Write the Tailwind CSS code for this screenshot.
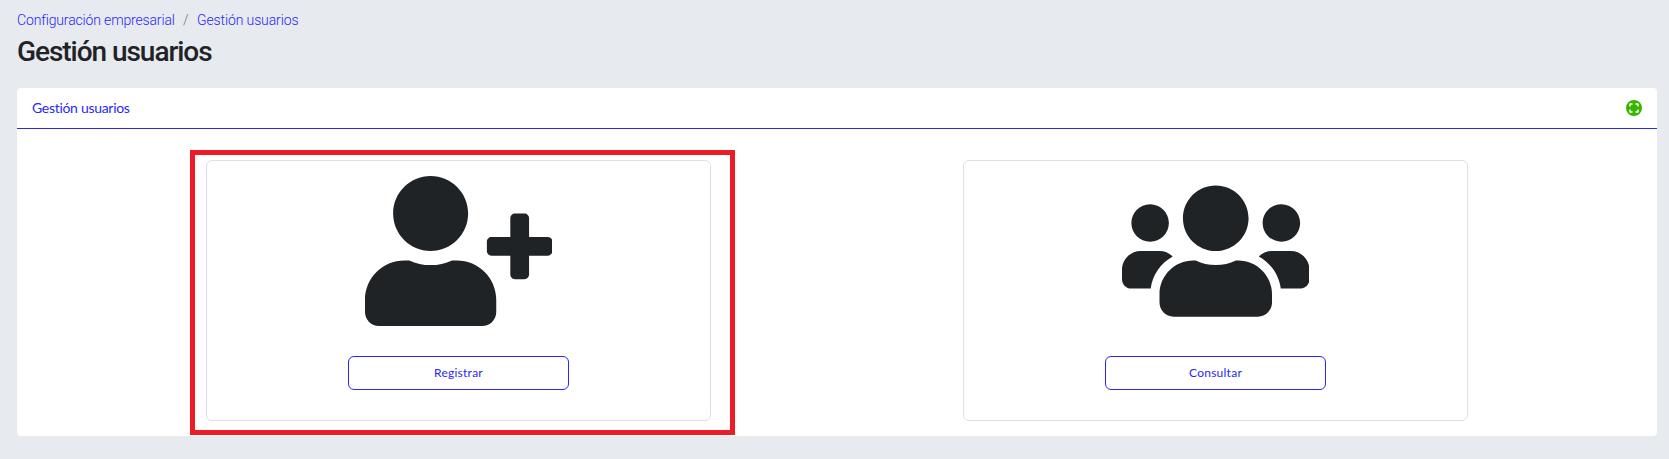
<!DOCTYPE html>
<html lang="es">
<head>
<meta charset="utf-8">
<title>Gestión usuarios</title>
<script src="https://cdn.jsdelivr.net/npm/@tailwindcss/browser@4"></script>
</head>
<body class="h-[459px] overflow-hidden bg-[#e7eaef] pl-[17px] pr-3 font-['Lato','Open_Sans',sans-serif] text-[#1f2326]">
  <nav class="flex h-[31px] items-start pt-[10px] font-['Roboto',sans-serif] text-sm leading-5 font-light text-[#2828f5]">
    <a class="w-[166px] whitespace-nowrap tracking-[-0.15px]">Configuración empresarial</a>
    <span class="w-[14px] text-gray-500">/</span>
    <a class="whitespace-nowrap tracking-[-0.12px]">Gestión usuarios</a>
  </nav>
  <h1 class="h-[57px] pt-[3px] font-['Roboto',sans-serif] text-[28px] leading-9 font-medium tracking-[-1.05px]">Gestión usuarios</h1>
  <main class="h-[348px] rounded bg-white">
    <header class="flex h-[41px] items-center justify-between border-b border-[#2828f5] pl-[15px] pr-[15px]">
      <span class="text-sm tracking-[-0.3px] text-[#2828f5]" >Gestión usuarios</span>
      <svg class="size-4" viewBox="0 0 16 16">
        <circle cx="8" cy="8" r="8" fill="#36b400"/>
        <path d="M4 6.600V4h2.600M9.400 4H12v2.600M12 9.400V12H9.400M6.600 12H4V9.400" fill="none" stroke="#fff" stroke-width="1.500" stroke-linejoin="round"/>
      </svg>
    </header>
    <div class="grid grid-cols-[505px_505px] gap-x-[252px] pl-[189px] pt-[31px]">
      <section class="relative flex h-[261px] flex-col items-center rounded-md border border-[#dfe0e3] pt-[15px]">
        <div class="absolute -left-[17px] -top-[11px] h-[285px] w-[545px] border-5 border-[#ee1b24]"></div>
        <svg class="h-[150px] w-[187.5px]" viewBox="0 0 640 512" fill="#1f2326"><path d="M624 208h-64v-64c0-8.800-7.200-16-16-16h-32c-8.800 0-16 7.200-16 16v64h-64c-8.800 0-16 7.200-16 16v32c0 8.800 7.200 16 16 16h64v64c0 8.800 7.200 16 16 16h32c8.800 0 16-7.200 16-16v-64h64c8.800 0 16-7.200 16-16v-32c0-8.800-7.200-16-16-16zm-400 48c70.700 0 128-57.300 128-128S294.700 0 224 0 96 57.300 96 128s57.300 128 128 128zm89.600 32h-16.700c-22.200 10.200-46.900 16-72.900 16s-50.600-5.800-72.900-16h-16.700C60.200 288 0 348.200 0 422.400V464c0 26.500 21.500 48 48 48h352c26.500 0 48-21.500 48-48v-41.600c0-74.200-60.200-134.400-134.400-134.400z"/></svg>
        <button class="mt-[30px] h-[34px] w-[221px] shrink-0 rounded-md border border-[#2828f5] text-xs tracking-[0.25px] text-[#2828f5]">Registrar</button>
      </section>
      <section class="flex h-[261px] flex-col items-center rounded-md border border-[#dfe0e3] pt-[15px]">
        <svg class="h-[150px] w-[187.5px]" viewBox="0 0 640 512" fill="#1f2326"><path d="M96 224c35.300 0 64-28.700 64-64s-28.700-64-64-64-64 28.700-64 64 28.700 64 64 64zm448 0c35.300 0 64-28.700 64-64s-28.700-64-64-64-64 28.700-64 64 28.700 64 64 64zm32 32h-64c-17.600 0-33.500 7.100-45.100 18.600 40.300 22.100 68.900 62 75.100 109.400h66c17.700 0 32-14.300 32-32v-32c0-35.300-28.700-64-64-64zm-256 0c61.900 0 112-50.100 112-112S381.900 32 320 32 208 82.100 208 144s50.100 112 112 112zm76.800 32h-8.300c-20.800 10-43.900 16-68.500 16s-47.600-6-68.500-16h-8.300C179.600 288 128 339.600 128 403.200V432c0 26.500 21.500 48 48 48h288c26.500 0 48-21.500 48-48v-28.800c0-63.600-51.600-115.200-115.200-115.200zm-223.700-13.400C161.500 263.100 145.600 256 128 256H64c-35.300 0-64 28.700-64 64v32c0 17.700 14.300 32 32 32h65.900c6.300-47.400 34.900-87.300 75.200-109.400z"/></svg>
        <button class="mt-[30px] h-[34px] w-[221px] shrink-0 rounded-md border border-[#2828f5] text-xs tracking-[0.25px] text-[#2828f5]">Consultar</button>
      </section>
    </div>
  </main>
</body>
</html>
